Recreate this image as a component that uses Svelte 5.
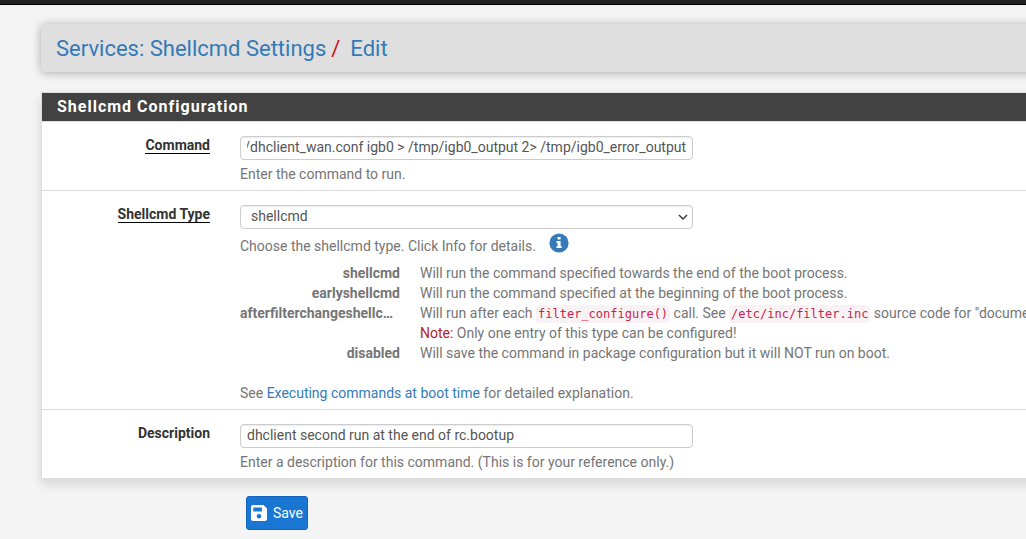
<script>
	import { onMount } from 'svelte';

	let command = $state('/sbin/dhclient -c /var/etc/dhclient_wan.conf igb0 > /tmp/igb0_output 2> /tmp/igb0_error_output');
	let type = $state('shellcmd');
	let description = $state('dhclient second run at the end of rc.bootup');
	let commandInput;

	const types = ['shellcmd', 'earlyshellcmd', 'afterfilterchangeshellcmd', 'disabled'];

	// keep the end of a long command in view
	onMount(() => {
		commandInput.scrollLeft = commandInput.scrollWidth;
	});
</script>

<div class="topbar"></div>

<div class="container">
	<header>
		<h1>
			<a href="#settings">Services: Shellcmd Settings</a><span class="slash">/</span><a href="#edit">Edit</a>
		</h1>
	</header>

	<form onsubmit={(event) => event.preventDefault()}>
		<section class="panel">
			<h2>Shellcmd Configuration</h2>

			<div class="row">
				<label for="cmd"><span class="required">Command</span></label>
				<div class="field">
					<input id="cmd" type="text" bind:value={command} bind:this={commandInput}>
					<p class="help">Enter the command to run.</p>
				</div>
			</div>

			<div class="row">
				<label for="cmdtype"><span class="required">Shellcmd Type</span></label>
				<div class="field">
					<div class="select">
						<select id="cmdtype" bind:value={type}>
							{#each types as name}
								<option value={name}>{name}</option>
							{/each}
						</select>
						<svg class="chevron" width="10" height="6" viewBox="0 0 10 6">
							<path d="M1 1l4 4 4-4" fill="none" stroke="#333" stroke-width="1.4" />
						</svg>
					</div>
					<div class="choose">
						<span>Choose the shellcmd type. Click Info for details.</span>
						<button class="info" type="button" aria-label="Info">
							<svg width="20" height="20" viewBox="0 0 20 20">
								<circle cx="10" cy="10" r="9.6" fill="#337ab7" />
								<path d="M8.6 4h3v2.5h-3zM7.4 8h4.2v5.2h1.2V15H7.4v-1.8h1.2V9.8H7.4z" fill="#fff" />
							</svg>
						</button>
					</div>
					<dl>
						<dt>shellcmd</dt>
						<dd>Will run the command specified towards the end of the boot process.</dd>
						<dt>earlyshellcmd</dt>
						<dd>Will run the command specified at the beginning of the boot process.</dd>
						<dt>afterfilterchangeshellcmd</dt>
						<dd>
							Will run after each <code>filter_configure()</code> call. See <code>/etc/inc/filter.inc</code> source code for "documentation".<br>
							<span class="note">Note:</span> Only one entry of this type can be configured!
						</dd>
						<dt>disabled</dt>
						<dd>Will save the command in package configuration but it will NOT run on boot.</dd>
					</dl>
					<p class="see">See <a href="#boot">Executing commands at boot time</a> for detailed explanation.</p>
				</div>
			</div>

			<div class="row">
				<label for="descr">Description</label>
				<div class="field">
					<input id="descr" type="text" bind:value={description}>
					<p class="help">Enter a description for this command. (This is for your reference only.)</p>
				</div>
			</div>
		</section>

		<button class="save" type="submit">
			<svg width="16" height="16" viewBox="0 0 16 16">
				<path fill="#fff" fill-rule="evenodd" d="M2 0h10.5L16 3.5V14a2 2 0 0 1-2 2H2a2 2 0 0 1-2-2V2a2 2 0 0 1 2-2zM2.3 2.6v3.8h8.6V2.6zM8 9a2.3 2.3 0 1 0 0 4.6A2.3 2.3 0 0 0 8 9z" />
			</svg>
			Save
		</button>
	</form>
</div>

<style>
	:global(body) {
		background: #f4f4f4;
		color: #757575;
		font: 14px/20px Roboto, sans-serif;
		overflow-x: hidden;
	}
	.topbar {
		height: 4px;
		background: #212121;
		border-bottom: 1px solid #000;
	}
	/* runs past the right edge of the window */
	.container {
		margin-right: -20px;
		padding: 19px 0 0 41px;
		overflow: hidden;
	}
	a {
		color: #337ab7;
		text-decoration: none;
	}
	header {
		background: #dfdfdf;
		border-radius: 4px;
		box-shadow: 0 1px 10px rgba(0, 0, 0, 0.3);
		padding: 13px 15px 11px;
		margin-bottom: 20px;
	}
	h1 {
		margin: 0;
		font-size: 22px;
		font-weight: 400;
		line-height: 24px;
	}
	.slash {
		color: #c9121f;
		padding: 0 10px 0 5px;
	}
	.panel {
		background: #fff;
		border: 1px solid #ddd;
		box-shadow: 0 6px 10px rgba(0, 0, 0, 0.12);
		white-space: nowrap;
	}
	h2 {
		margin: 0;
		padding: 0 15px;
		background: #424242;
		color: #fff;
		font-size: 16px;
		font-weight: 700;
		line-height: 28px;
		letter-spacing: 1px;
	}
	.row {
		display: grid;
		grid-template-columns: 168px minmax(0, 1fr);
		column-gap: 30px;
		border-top: 1px solid #ddd;
		padding: 13px 0 6px;
	}
	.field {
		padding-top: 1px;
	}
	label {
		color: #333;
		font-weight: 700;
		text-align: right;
	}
	.required {
		display: inline-block;
		line-height: 16px;
		border-bottom: 1px solid #000;
	}
	input,
	select {
		box-sizing: border-box;
		display: block;
		width: 453px;
		height: 24px;
		padding: 0 6px 2px;
		border: 1px solid #ccc;
		border-radius: 4px;
		background: #fff;
		box-shadow: inset 0 1px 1px rgba(0, 0, 0, 0.08);
		color: #555;
		font: inherit;
	}
	select {
		appearance: none;
		padding: 0 10px 2px;
	}
	.select {
		display: grid;
		width: 453px;
	}
	.select > * {
		grid-area: 1 / 1;
	}
	.chevron {
		justify-self: end;
		align-self: center;
		margin-right: 5px;
		pointer-events: none;
	}
	p {
		margin: 0;
	}
	.help {
		padding-top: 4px;
	}
	.choose {
		display: flex;
		gap: 13px;
		margin: 4px 0 7px;
		align-items: flex-end;
	}
	.info {
		display: flex;
		padding: 0 0 3px;
		border: 0;
		background: none;
	}
	dl {
		display: grid;
		grid-template-columns: 160px minmax(0, 1fr);
		column-gap: 20px;
		margin: 0 0 20px;
	}
	dt {
		overflow: hidden;
		text-overflow: ellipsis;
		font-weight: 700;
		text-align: right;
	}
	dd {
		margin: 0;
	}
	code {
		padding: 2px;
		border-radius: 4px;
		background: #f9f2f4;
		color: #c7254e;
		font: 12px/18px "DejaVu Sans Mono", monospace;
	}
	.note {
		color: #b71c1c;
	}
	.save {
		display: flex;
		align-items: center;
		gap: 6px;
		margin: 17px 0 9px 205px;
		padding: 6px 4px;
		border: 1px solid #1565c0;
		border-radius: 3px;
		background: #1976d2;
		color: #fff;
		font: inherit;
	}
</style>
